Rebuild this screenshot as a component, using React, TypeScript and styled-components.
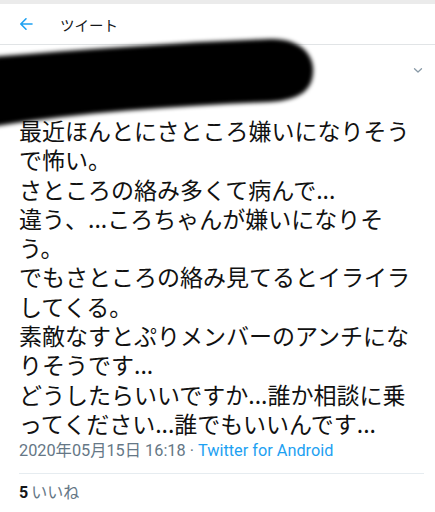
import React from "react";
import styled, { createGlobalStyle } from "styled-components";

const Global = createGlobalStyle`
  html, body { margin: 0; padding: 0; background: #ffffff; }
  body { font-family: Roboto, "Noto Sans CJK JP", sans-serif; color: #14171a; }
`;

const Page = styled.div`
  position: relative;
  width: 435px;
  height: 512px;
  overflow: hidden;
  background: #fff;
`;

const StatusStrip = styled.div`
  height: 4px;
  background: #ebebeb;
`;

const Header = styled.header`
  height: 40px;
  display: flex;
  align-items: center;
  padding-left: 19px;
  border-bottom: 1px solid #e1e4e6;
`;

const Title = styled.h1`
  margin: 0 0 0 27px;
  font-size: 14.5px;
  font-weight: 400;
  color: #14171a;
  font-family: "Noto Sans CJK JP", sans-serif;
`;

const AuthorRow = styled.div`
  height: 71px;
  display: flex;
  align-items: flex-start;
  justify-content: flex-end;
  padding: 22px 12px 0 0;
  box-sizing: border-box;
`;

const Scribble = styled.svg`
  position: absolute;
  left: 0;
  top: 0;
  pointer-events: none;
`;

const TweetText = styled.div`
  padding: 0 19px;
  font-family: "Noto Sans CJK JP", sans-serif;
  font-size: 23px;
  line-height: 29.3px;
  color: #111;
  white-space: nowrap;
`;

const Line = styled.span`
  display: block;
`;

const Meta = styled.div`
  margin: 2px 19px 0;
  font-size: 16.3px;
  line-height: 22px;
  color: #657786;
  font-family: Roboto, "Noto Sans CJK JP", sans-serif;
`;

const Source = styled.span`
  color: #1da1f2;
`;

const Divider = styled.hr`
  margin: 11px 11px 0 19px;
  border: 0;
  border-top: 1px solid #e6ecf0;
`;

const Likes = styled.div`
  margin: 8px 19px 0;
  font-size: 16px;
  line-height: 22px;
  color: #657786;
  font-family: Roboto, "Noto Sans CJK JP", sans-serif;
`;

const Count = styled.b`
  color: #14171a;
  font-weight: 700;
  margin-right: 3px;
`;

const lines = [
  "最近ほんとにさところ嫌いになりそう",
  "で怖い。",
  "さところの絡み多くて病んで...",
  "違う、...ころちゃんが嫌いになりそ",
  "う。",
  "でもさところの絡み見てるとイライラ",
  "してくる。",
  "素敵なすとぷりメンバーのアンチにな",
  "りそうです...",
  "どうしたらいいですか...誰か相談に乗",
  "ってください...誰でもいいんです...",
];

export default function App() {
  return (
    <Page>
      <Global />
      <StatusStrip />
      <Header>
        <svg width="14" height="14" viewBox="0 0 14 14" fill="none">
          <path d="M13 7H2M7 1.8L1.8 7L7 12.2" stroke="#1da1f2" strokeWidth="1.6" strokeLinecap="round" strokeLinejoin="round" />
        </svg>
        <Title>ツイート</Title>
      </Header>
      <AuthorRow>
        <svg width="10" height="7" viewBox="0 0 10 7" fill="none">
          <path d="M1.5 1.8L5 5L8.5 1.8" stroke="#8899a6" strokeWidth="1.3" strokeLinecap="round" strokeLinejoin="round" />
        </svg>
      </AuthorRow>
      <TweetText>
        {lines.map((l, i) => (
          <Line key={i}>{l}</Line>
        ))}
      </TweetText>
      <Meta>
        2020年05月15日 16:18 · <Source>Twitter for Android</Source>
      </Meta>
      <Divider />
      <Likes>
        <Count>5</Count>いいね
      </Likes>
      <Scribble width="435" height="140" viewBox="0 0 435 140">
        <defs>
          <filter id="blur" x="-10%" y="-30%" width="120%" height="160%">
            <feGaussianBlur stdDeviation="2.2" />
          </filter>
        </defs>
        <path
          d="M-10,57 C80,50 180,42 270,39 C300,38 315,55 313,73 C312,90 300,100 270,102 C180,106 80,112 -10,127 Z"
          fill="#000"
          filter="url(#blur)"
        />
      </Scribble>
    </Page>
  );
}
